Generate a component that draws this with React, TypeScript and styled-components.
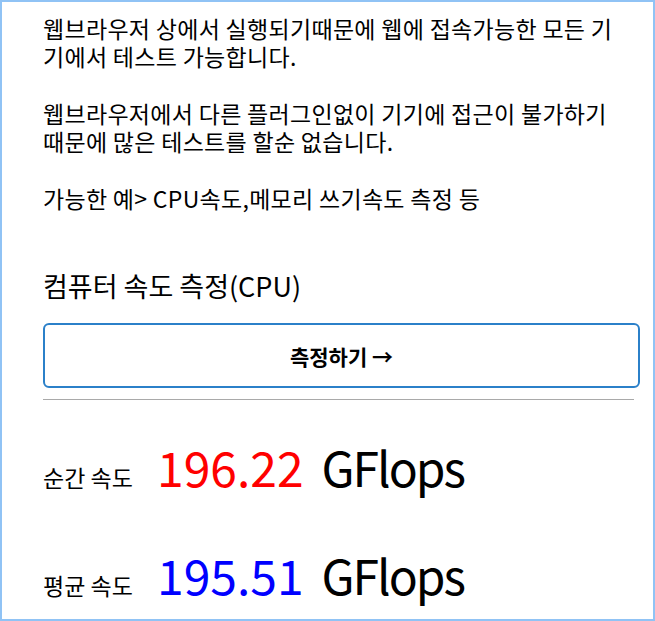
import React from 'react';
import styled, { createGlobalStyle } from 'styled-components';

const GlobalStyle = createGlobalStyle`
    html, body {
        margin: 0;
        padding: 0;
        background: #ffffff;
    }
    body {
        font-family: 'Noto Sans CJK KR', 'Noto Sans', sans-serif;
        color: #000000;
    }
`;

const Frame = styled.div`
    box-sizing: border-box;
    width: 655px;
    height: 621px;
    border: 2px solid #90c3f5;
    overflow: hidden;
    padding: 12px 13px 0 41px;
`;

const Paragraph = styled.p`
    margin: 0 0 29px;
    font-size: 23px;
    line-height: 28px;
    letter-spacing: 0.3px;
    padding-right: 10px;
`;

const Heading = styled.h2`
    margin: 56px 0 19px;
    font-size: 27px;
    font-weight: 400;
    line-height: 36px;
`;

const MeasureButton = styled.button`
    display: flex;
    align-items: center;
    justify-content: center;
    box-sizing: border-box;
    width: 100%;
    height: 65px;
    background: #ffffff;
    border: 2px solid #2b80c9;
    border-radius: 6px;
    font-family: inherit;
    font-size: 21px;
    font-weight: 700;
    color: #000000;
    cursor: pointer;
`;

const Divider = styled.hr`
    margin: 11px 6px 0 0;
    border: 0;
    border-top: 1px solid #a9a9a9;
`;

const SpeedList = styled.div`
    display: flex;
    flex-direction: column;
    gap: 48px;
    margin-top: 36px;
`;

const SpeedRow = styled.div`
    display: flex;
    align-items: baseline;
`;

const SpeedLabel = styled.span`
    font-size: 23px;
    width: 114px;
`;

const SpeedValue = styled.span<{ $color: string }>`
    font-size: 48px;
    line-height: 60px;
    color: ${({ $color }) => $color};
    margin-right: 18px;
`;

const SpeedUnit = styled.span`
    font-size: 48px;
    line-height: 60px;
    letter-spacing: -2px;
`;

const speeds = [
    { label: '순간 속도', value: '196.22', color: '#ff0000' },
    { label: '평균 속도', value: '195.51', color: '#0000ff' },
];

export default function App() {
    return (
        <>
            <GlobalStyle />
            <Frame>
                <Paragraph>
                    웹브라우저 상에서 실행되기때문에 웹에 접속가능한 모든 기기에서 테스트 가능합니다.
                </Paragraph>
                <Paragraph>
                    웹브라우저에서 다른 플러그인없이 기기에 접근이 불가하기 때문에 많은 테스트를 할순 없습니다.
                </Paragraph>
                <Paragraph>가능한 예&gt; CPU속도,메모리 쓰기속도 측정 등</Paragraph>
                <Heading>컴퓨터 속도 측정(CPU)</Heading>
                <MeasureButton>측정하기 →</MeasureButton>
                <Divider />
                <SpeedList>
                    {speeds.map((s) => (
                        <SpeedRow key={s.label}>
                            <SpeedLabel>{s.label}</SpeedLabel>
                            <SpeedValue $color={s.color}>{s.value}</SpeedValue>
                            <SpeedUnit>GFlops</SpeedUnit>
                        </SpeedRow>
                    ))}
                </SpeedList>
            </Frame>
        </>
    );
}
